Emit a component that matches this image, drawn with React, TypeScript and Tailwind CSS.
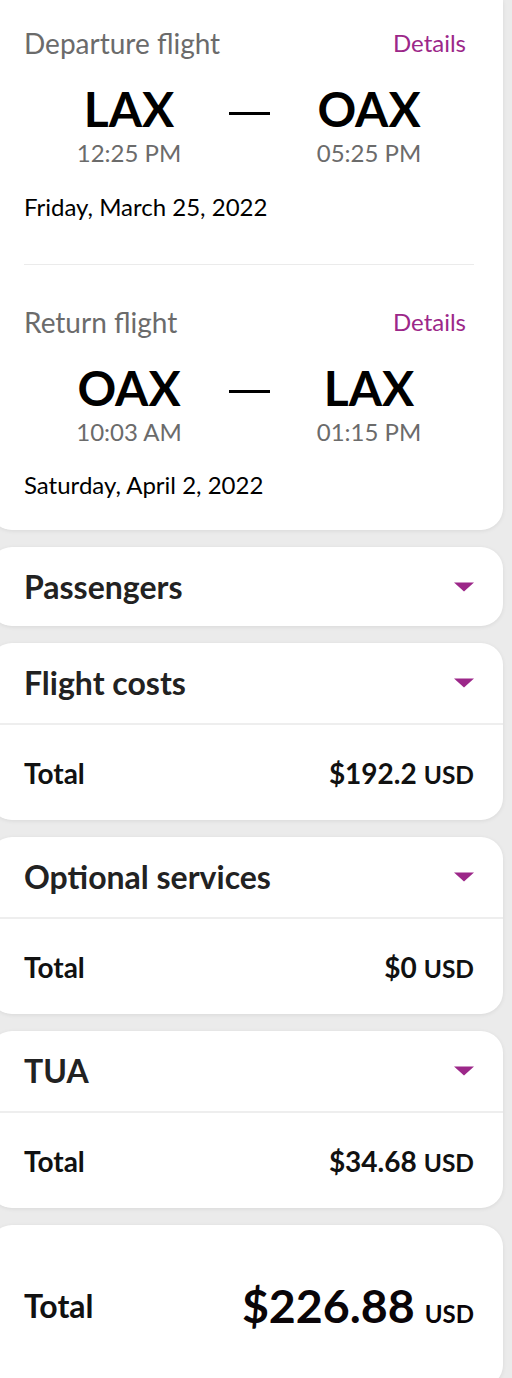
import React from "react";

type Flight = {
  label: string;
  from: string;
  to: string;
  departs: string;
  arrives: string;
  date: string;
};

const flights: Flight[] = [
  { label: "Departure flight", from: "LAX", to: "OAX", departs: "12:25 PM", arrives: "05:25 PM", date: "Friday, March 25, 2022" },
  { label: "Return flight", from: "OAX", to: "LAX", departs: "10:03 AM", arrives: "01:15 PM", date: "Saturday, April 2, 2022" },
];

const costs = [
  { title: "Flight costs", amount: "$192.2" },
  { title: "Optional services", amount: "$0" },
  { title: "TUA", amount: "$34.68" },
];

function Caret() {
  return (
    <svg width="20" height="10" viewBox="0 0 20 10" className="shrink-0">
      <path d="M0 0.5 L20 0.5 L10 9.5 Z" fill="#9c2789" />
    </svg>
  );
}

function FlightSection({ flight }: { flight: Flight }) {
  return (
    <div>
      <div className="flex h-[30px] items-center justify-between">
        <span className="text-[28px] leading-[30px] text-[#6b6b6b]">{flight.label}</span>
        <span className="mr-[8px] text-[24px] leading-[30px] text-[#9c2789]">Details</span>
      </div>
      <div className="mx-auto mt-[27px] grid w-[360px] grid-cols-3">
        <div className="flex flex-col items-center">
          <span className="text-[48px] font-bold leading-[48px] text-black">{flight.from}</span>
          <span className="mt-[6px] text-[24px] leading-[28px] text-[#6b6b6b]">{flight.departs}</span>
        </div>
        <div className="flex justify-center pt-[26.5px]">
          <div className="h-[3px] w-[41px] bg-black" />
        </div>
        <div className="flex flex-col items-center">
          <span className="text-[48px] font-bold leading-[48px] text-black">{flight.to}</span>
          <span className="mt-[6px] text-[24px] leading-[28px] text-[#6b6b6b]">{flight.arrives}</span>
        </div>
      </div>
      <p className="mt-[25.5px] text-[24px] leading-[28px] text-black">{flight.date}</p>
    </div>
  );
}

export default function App() {
  return (
    <div className="min-h-screen overflow-hidden bg-[#ebebeb] font-['Lato',sans-serif]">
      <div className="ml-[-10px] flex w-[513px] flex-col gap-[17px]">
        <div className="rounded-b-[22px] bg-white pb-[31px] pl-[34px] pr-[29px] pt-[28px] shadow-[0_1px_4px_rgba(0,0,0,0.08)]">
          <FlightSection flight={flights[0]} />
          <div className="mt-[43px] h-[1px] bg-[#ebebeb]" />
          <div className="mt-[42px]">
            <FlightSection flight={flights[1]} />
          </div>
        </div>

        <div className="flex h-[79px] items-center justify-between rounded-[22px] bg-white pl-[34px] pr-[29px] shadow-[0_1px_4px_rgba(0,0,0,0.08)]">
          <span className="text-[32px] font-bold text-[#222]">Passengers</span>
          <Caret />
        </div>

        {costs.map((c) => (
          <div key={c.title} className="rounded-[22px] bg-white shadow-[0_1px_4px_rgba(0,0,0,0.08)]">
            <div className="flex h-[82px] items-center justify-between border-b-2 border-[#eeeeee] pl-[34px] pr-[29px]">
              <span className="text-[32px] font-bold text-[#222]">{c.title}</span>
              <Caret />
            </div>
            <div className="flex h-[95px] items-center justify-between pl-[34px] pr-[29px]">
              <span className="text-[28px] font-bold text-[#111]">Total</span>
              <span className="flex items-baseline font-bold text-[#111]">
                <span className="text-[28px]">{c.amount}</span>
                <span className="ml-[7px] text-[24.5px]">USD</span>
              </span>
            </div>
          </div>
        ))}

        <div className="flex h-[162px] items-center justify-between rounded-[22px] bg-white pl-[34px] pr-[29px] shadow-[0_1px_4px_rgba(0,0,0,0.08)]">
          <span className="text-[32px] font-bold text-[#111]">Total</span>
          <span className="flex items-baseline font-bold text-[#0a0508]">
            <span className="text-[46.5px]">$226.88</span>
            <span className="ml-[10px] text-[24px]">USD</span>
          </span>
        </div>
      </div>
    </div>
  );
}
